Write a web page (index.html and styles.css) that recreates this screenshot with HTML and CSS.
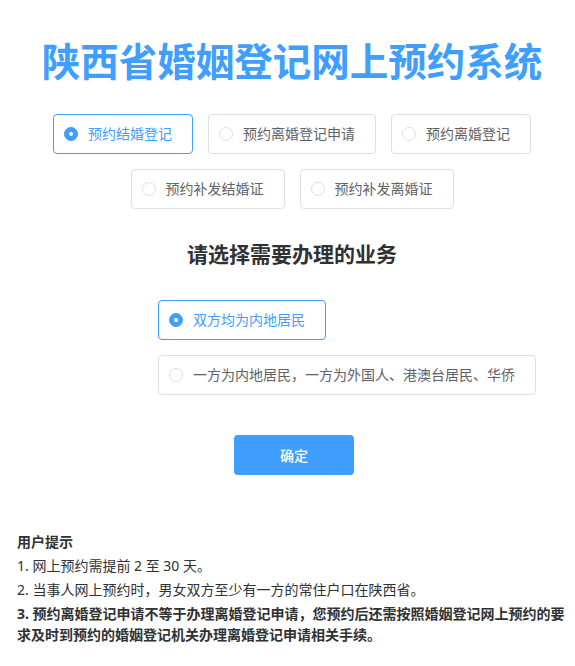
FILE: index.html
```html
<!DOCTYPE html>
<html lang="zh-CN">
<head>
<meta charset="utf-8">
<title>陕西省婚姻登记网上预约系统</title>
<link rel="stylesheet" href="styles.css">
</head>
<body>
<div class="page">
  <h1 class="title">陕西省婚姻登记网上预约系统</h1>

  <div class="types">
    <div class="row">
      <label class="radio is-checked"><span class="dot"></span><span class="label">预约结婚登记</span></label>
      <label class="radio"><span class="dot"></span><span class="label">预约离婚登记申请</span></label>
      <label class="radio"><span class="dot"></span><span class="label">预约离婚登记</span></label>
    </div>
    <div class="row">
      <label class="radio"><span class="dot"></span><span class="label">预约补发结婚证</span></label>
      <label class="radio"><span class="dot"></span><span class="label">预约补发离婚证</span></label>
    </div>
  </div>

  <h2 class="heading">请选择需要办理的业务</h2>

  <div class="options">
    <label class="radio is-checked"><span class="dot"></span><span class="label">双方均为内地居民</span></label>
    <label class="radio"><span class="dot"></span><span class="label">一方为内地居民，一方为外国人、港澳台居民、华侨</span></label>
  </div>

  <div class="actions">
    <button class="btn" type="button">确定</button>
  </div>

  <div class="tips">
    <div class="tips-title">用户提示</div>
    <p>1. 网上预约需提前 2 至 30 天。</p>
    <p>2. 当事人网上预约时，男女双方至少有一方的常住户口在陕西省。</p>
    <p class="strong">3. 预约离婚登记申请不等于办理离婚登记申请，您预约后还需按照婚姻登记网上预约的要求及时到预约的婚姻登记机关办理离婚登记申请相关手续。</p>
  </div>
</div>
</body>
</html>
```

FILE: styles.css
```css
* { box-sizing: border-box; }

body {
  margin: 0;
  background: #ffffff;
  font-family: "Noto Sans", "Noto Sans CJK SC", sans-serif;
  color: #303133;
}

.page {
  padding: 43px 8px 20px 17px;
}

.title {
  margin: 0;
  text-align: center;
  font-size: 38.5px;
  line-height: 36px;
  font-weight: bold;
  color: #409eff;
  white-space: nowrap;
}

.types {
  margin-top: 35px;
  display: flex;
  flex-direction: column;
  gap: 15px;
}

.row {
  display: flex;
  justify-content: center;
  gap: 15px;
}

.radio {
  display: inline-flex;
  align-items: center;
  height: 40px;
  padding: 0 20px 0 10px;
  border: 1px solid #dcdfe6;
  border-radius: 4px;
  font-size: 14px;
  line-height: 14px;
  color: #606266;
  white-space: nowrap;
  cursor: pointer;
}

.dot {
  width: 14px;
  height: 14px;
  border: 1px solid #dcdfe6;
  border-radius: 50%;
  background: #fff;
  flex: none;
  position: relative;
}

.label {
  padding-left: 10px;
}

.radio.is-checked {
  border-color: #409eff;
  color: #409eff;
}

.radio.is-checked .dot {
  background: #409eff;
  border-color: #409eff;
}

.radio.is-checked .dot::after {
  content: "";
  position: absolute;
  left: 50%;
  top: 50%;
  width: 4px;
  height: 4px;
  margin: -2px 0 0 -2px;
  border-radius: 50%;
  background: #fff;
}

.heading {
  margin: 35px 0 0;
  text-align: center;
  font-size: 21px;
  line-height: 21px;
  font-weight: bold;
  color: #303133;
}

.options {
  margin-top: 35px;
  padding-left: 141px;
  display: flex;
  flex-direction: column;
  align-items: flex-start;
  gap: 15px;
}

.actions {
  margin-top: 40px;
  display: flex;
  justify-content: center;
  padding-left: 4px;
}

.btn {
  width: 120px;
  height: 40px;
  border: 0;
  border-radius: 4px;
  background: #409eff;
  color: #ffffff;
  font-family: inherit;
  font-size: 14px;
  font-weight: 500;
  cursor: pointer;
}

.tips {
  margin-top: 56px;
  font-size: 14px;
  line-height: 21px;
  color: #303133;
}

.tips-title {
  font-weight: bold;
}

.tips p {
  margin: 3px 0 0;
}

.tips .strong {
  font-weight: bold;
}
```
